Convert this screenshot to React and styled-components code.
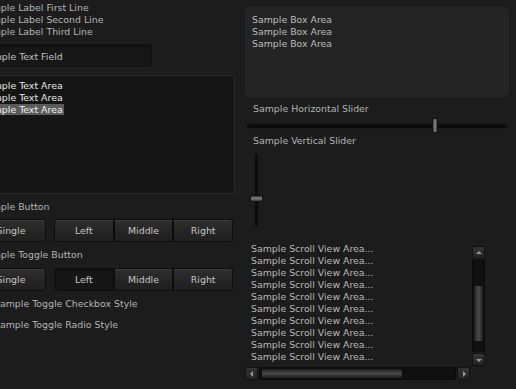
import React from "react";
import styled, { createGlobalStyle, css } from "styled-components";

const LABELS = ["Sample Label First Line", "Sample Label Second Line", "Sample Label Third Line"];
const SEGMENTS = ["Left", "Middle", "Right"];

const GlobalStyle = createGlobalStyle`
  html, body {
    margin: 0;
    padding: 0;
    background: #1c1c1c;
    overflow: hidden;
  }
  body {
    font-family: "DejaVu Sans", "Noto Sans", sans-serif;
    font-size: 9.4px;
    color: #b4b4b4;
  }
`;

const Page = styled.div`
  display: flex;
  width: 516px;
  height: 389px;
`;

const LeftCol = styled.div`
  display: flex;
  flex-direction: column;
  width: 259px;
  margin-left: -24px;
  padding-top: 2px;
  flex-shrink: 0;
`;

const RightCol = styled.div`
  display: flex;
  flex-direction: column;
  width: 264px;
  margin-left: 10px;
  padding-top: 7px;
  flex-shrink: 0;
`;

const Line = styled.div`
  height: 12px;
  line-height: 12px;
  white-space: nowrap;
  padding-left: ${(p) => p.$indent ?? 4}px;
  margin-top: ${(p) => p.$top ?? 0}px;
`;

const TextField = styled.div`
  box-sizing: border-box;
  width: 176px;
  height: 23px;
  margin-top: 6px;
  padding-left: 4px;
  line-height: 23px;
  background: #171717;
  border: 1px solid #121212;
  border-radius: 3px;
  box-shadow: inset 0 1px 2px rgba(0, 0, 0, 0.5), 0 1px 0 rgba(255, 255, 255, 0.03);
  color: #c2c2c2;
`;

const TextArea = styled.div`
  box-sizing: border-box;
  width: 259px;
  height: 119px;
  margin-top: 8px;
  padding-top: 4px;
  background: #151515;
  border: 1px solid #2b2b2b;
  border-radius: 3px;
  color: #e6e6e6;
`;

const AreaLine = styled.div`
  height: 12px;
  line-height: 12px;
  padding-left: 4px;
  white-space: nowrap;
  span {
    background: ${(p) => (p.$selected ? "#5b5b5b" : "transparent")};
    color: ${(p) => (p.$selected ? "#f2f2f2" : "inherit")};
    padding-right: 1px;
  }
`;

const ButtonRow = styled.div`
  display: flex;
  gap: 8px;
  margin-top: ${(p) => p.$top}px;
  height: 23px;
`;

const buttonFace = css`
  box-sizing: border-box;
  display: flex;
  align-items: center;
  justify-content: center;
  color: #c6c6c6;
  background: linear-gradient(#2f2f2f, #242424 60%, #202020);
  border: 1px solid #0d0d0d;
  box-shadow: inset 0 1px 0 rgba(255, 255, 255, 0.07);
`;

const SingleButton = styled.div`
  ${buttonFace}
  width: 70px;
  border-radius: 3px;
`;

const Group = styled.div`
  display: flex;
  width: 179px;
`;

const Segment = styled.div`
  ${buttonFace}
  flex: 1;
  ${(p) => p.$first && "border-radius: 3px 0 0 3px;"}
  ${(p) => p.$last && "border-radius: 0 3px 3px 0;"}
  ${(p) => !p.$first && "border-left: 1px solid #0a0a0a;"}
  ${(p) =>
    p.$active &&
    css`
      background: #161616;
      box-shadow: inset 0 1px 3px rgba(0, 0, 0, 0.6);
      border-color: #111;
    `}
`;

const Box = styled.div`
  box-sizing: border-box;
  height: 90px;
  padding: 6px 0 0 6px;
  background: #242424;
  border-radius: 4px;
  border: 1px solid #262626;
  color: #bcbcbc;
`;

const HSlider = styled.div`
  position: relative;
  height: 15px;
  margin-top: 3px;
  display: flex;
  align-items: center;
`;

const HTrack = styled.div`
  margin-left: 1px;
  width: 262px;
  height: 6px;
  background: #0c0c0c;
  border: 1px solid #1a1a1a;
  border-radius: 3px;
  box-sizing: border-box;
`;

const HThumb = styled.div`
  position: absolute;
  left: 187px;
  top: 0;
  width: 6px;
  height: 15px;
  border-radius: 2px;
  background: linear-gradient(90deg, #3a3a3a, #8a8a8a 50%, #3a3a3a);
  border: 1px solid #111;
  box-sizing: border-box;
`;

const VSlider = styled.div`
  position: relative;
  height: 74px;
  margin-top: 6px;
  width: 20px;
`;

const VTrack = styled.div`
  margin-left: 9px;
  width: 5px;
  height: 74px;
  background: #0c0c0c;
  border: 1px solid #1a1a1a;
  border-radius: 3px;
  box-sizing: border-box;
`;

const VThumb = styled.div`
  position: absolute;
  left: 5px;
  top: 42px;
  width: 13px;
  height: 7px;
  border-radius: 2px;
  background: linear-gradient(#3a3a3a, #7d7d7d 50%, #3a3a3a);
  border: 1px solid #111;
  box-sizing: border-box;
`;

const ScrollView = styled.div`
  display: grid;
  grid-template-columns: 227px 13px;
  grid-template-rows: 124px 13px;
  margin-top: 16px;
`;

const ScrollContent = styled.div`
  overflow: hidden;
  color: #b8b8b8;
`;

const VBar = styled.div`
  display: flex;
  flex-direction: column;
  margin-top: 3px;
  height: 120px;
`;

const HBar = styled.div`
  display: flex;
  width: 225px;
`;

const ArrowButton = styled.div`
  box-sizing: border-box;
  width: 13px;
  height: 13px;
  flex-shrink: 0;
  display: flex;
  align-items: center;
  justify-content: center;
  border-radius: 2px;
  background: linear-gradient(#343434, #242424);
  border: 1px solid #111;
`;

const Track = styled.div`
  position: relative;
  flex: 1;
  background: #101010;
  border: 1px solid #0a0a0a;
  box-sizing: border-box;
  margin: ${(p) => (p.$vertical ? "1px 0" : "0 1px")};
`;

const VThumbBar = styled.div`
  position: absolute;
  left: 0;
  right: 0;
  top: 24px;
  height: 55px;
  border-radius: 2px;
  background: linear-gradient(90deg, #1e1e1e, #4a4a4a 50%, #1e1e1e);
  border: 1px solid #0d0d0d;
`;

const HThumbBar = styled.div`
  position: absolute;
  top: 0;
  bottom: 0;
  left: 1px;
  width: 140px;
  border-radius: 2px;
  background: linear-gradient(#1e1e1e, #474747 50%, #1e1e1e);
  border: 1px solid #0d0d0d;
`;

const Arrow = ({ dir }) => {
  const pts = {
    up: "0,4 3,1 6,4",
    down: "0,2 3,5 6,2",
    left: "4,0 1,3 4,6",
    right: "2,0 5,3 2,6",
  }[dir];
  return (
    <svg width="6" height="6" viewBox="0 0 6 6">
      <polygon points={pts} fill="#9a9a9a" />
    </svg>
  );
};

export default function App() {
  return (
    <>
      <GlobalStyle />
      <Page>
        <LeftCol>
          {LABELS.map((l) => (
            <Line key={l}>{l}</Line>
          ))}
          <TextField>Sample Text Field</TextField>
          <TextArea>
            <AreaLine>
              <span>Sample Text Area</span>
            </AreaLine>
            <AreaLine>
              <span>Sample Text Area</span>
            </AreaLine>
            <AreaLine $selected>
              <span>Sample Text Area</span>
            </AreaLine>
          </TextArea>
          <Line $top={7}>Sample Button</Line>
          <ButtonRow $top={6}>
            <SingleButton>Single</SingleButton>
            <Group>
              {SEGMENTS.map((s, i) => (
                <Segment key={s} $first={i === 0} $last={i === SEGMENTS.length - 1}>
                  {s}
                </Segment>
              ))}
            </Group>
          </ButtonRow>
          <Line $top={7}>Sample Toggle Button</Line>
          <ButtonRow $top={7}>
            <SingleButton>Single</SingleButton>
            <Group>
              {SEGMENTS.map((s, i) => (
                <Segment
                  key={s}
                  $first={i === 0}
                  $last={i === SEGMENTS.length - 1}
                  $active={i === 0}
                >
                  {s}
                </Segment>
              ))}
            </Group>
          </ButtonRow>
          <Line $top={7} $indent={18}>Sample Toggle Checkbox Style</Line>
          <Line $top={9} $indent={18}>Sample Toggle Radio Style</Line>
        </LeftCol>

        <RightCol>
          <Box>
            <Line $indent={0}>Sample Box Area</Line>
            <Line $indent={0}>Sample Box Area</Line>
            <Line $indent={0}>Sample Box Area</Line>
          </Box>
          <Line $top={6} $indent={8}>Sample Horizontal Slider</Line>
          <HSlider>
            <HTrack />
            <HThumb />
          </HSlider>
          <Line $top={2} $indent={8}>Sample Vertical Slider</Line>
          <VSlider>
            <VTrack />
            <VThumb />
          </VSlider>
          <ScrollView>
            <ScrollContent>
              {Array.from({ length: 10 }, (_, i) => (
                <Line key={i} $indent={6}>Sample Scroll View Area...</Line>
              ))}
            </ScrollContent>
            <VBar>
              <ArrowButton>
                <Arrow dir="up" />
              </ArrowButton>
              <Track $vertical>
                <VThumbBar />
              </Track>
              <ArrowButton>
                <Arrow dir="down" />
              </ArrowButton>
            </VBar>
            <HBar>
              <ArrowButton>
                <Arrow dir="left" />
              </ArrowButton>
              <Track>
                <HThumbBar />
              </Track>
              <ArrowButton>
                <Arrow dir="right" />
              </ArrowButton>
            </HBar>
          </ScrollView>
        </RightCol>
      </Page>
    </>
  );
}
